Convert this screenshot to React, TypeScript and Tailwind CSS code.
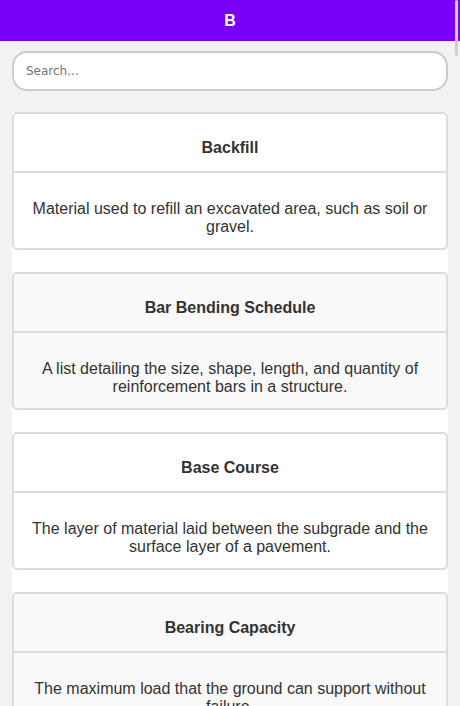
import React from "react";

const terms = [
  { t: "Backfill", d: "Material used to refill an excavated area, such as soil or gravel." },
  { t: "Bar Bending Schedule", d: "A list detailing the size, shape, length, and quantity of reinforcement bars in a structure." },
  { t: "Base Course", d: "The layer of material laid between the subgrade and the surface layer of a pavement." },
  { t: "Bearing Capacity", d: "The maximum load that the ground can support without failure." },
  { t: "Beam", d: "A horizontal structural member that carries loads across a span." },
  { t: "Benchmark", d: "A fixed reference point of known elevation used in surveying." },
  { t: "Bitumen", d: "A black, sticky material derived from petroleum used in road construction." },
];

export default function App() {
  return (
    <div className="min-h-screen bg-[#f2f2f2]" style={{ fontFamily: '"Liberation Sans", Arial, sans-serif' }}>
      <div className="h-[41px] bg-[#7a00f9] flex items-center justify-center">
        <span className="text-white font-bold text-[16px]">B</span>
      </div>
      <div className="px-[12px]">
        <input
          type="text"
          placeholder="Search..."
          className="mt-[10px] block w-full h-[40px] rounded-[15px] border-2 border-[#cccccc] bg-white pl-[12px] text-[12px] outline-none placeholder:text-[#757575]"
          style={{ fontFamily: '"DejaVu Sans", sans-serif' }}
        />
        <div className="mt-[21px] bg-white">
          {terms.map((x, i) => (
            <div
              key={x.t}
              className={`mb-[22px] rounded-[5px] border-2 border-[#dddddd] text-center text-[#333333] ${i % 2 === 1 ? "bg-[#f9f9f9]" : "bg-white"}`}
            >
              <div className="pt-[25px] pb-[14px] px-[10px] border-b-2 border-[#dddddd] font-bold text-[16px] leading-[18px]">
                {x.t}
              </div>
              <div className="pt-[27px] pb-[12px] px-[16px] text-[16px] leading-[18px]">{x.d}</div>
            </div>
          ))}
        </div>
      </div>
      <div className="fixed top-0 right-[2px] w-[3px] h-[56px] rounded-full bg-[#cfcfcf]" />
    </div>
  );
}
